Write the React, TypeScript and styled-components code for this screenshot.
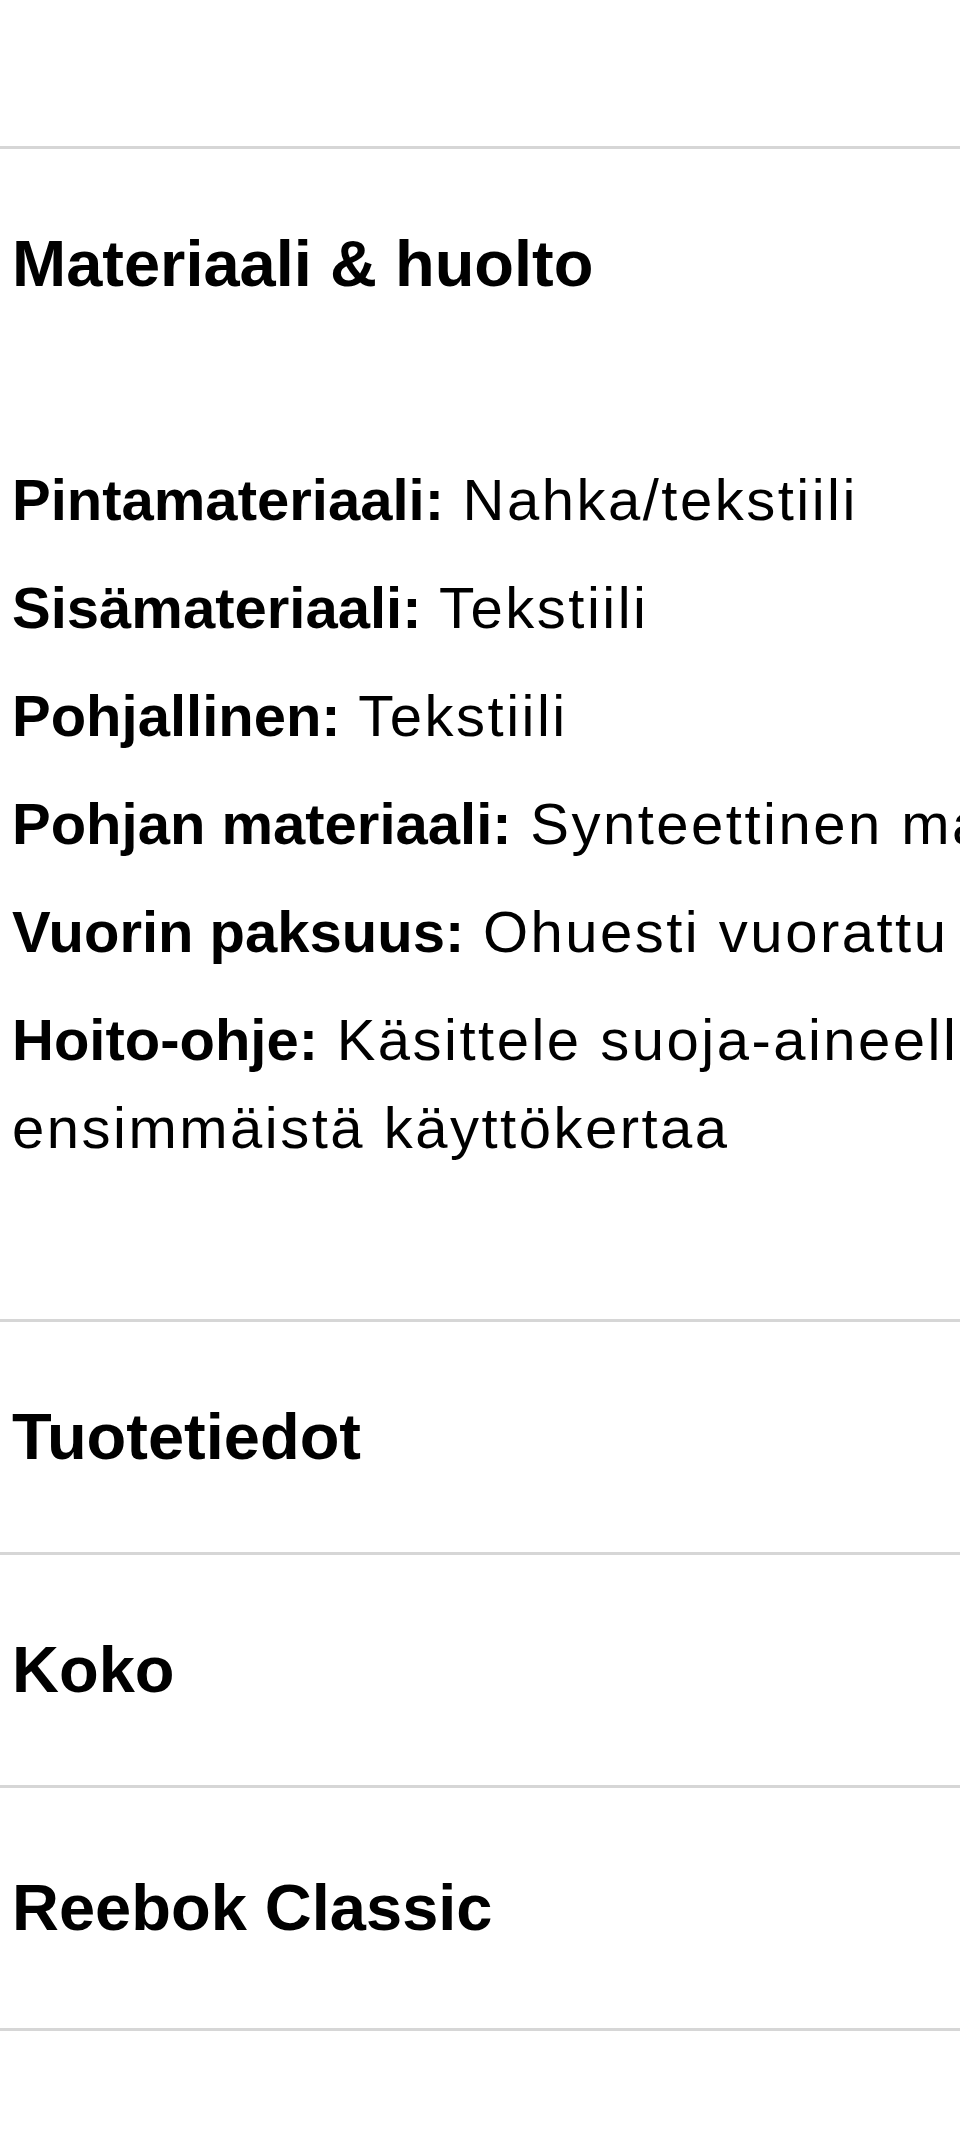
import React from "react";
import styled, { createGlobalStyle } from "styled-components";

const GlobalStyle = createGlobalStyle`
  html, body {
    margin: 0;
    padding: 0;
    background: #ffffff;
    overflow-x: hidden;
  }
  body {
    font-family: "Liberation Sans", Arial, Helvetica, sans-serif;
    color: #000000;
  }
`;

const Page = styled.main`
  width: 1300px;
  padding-top: 146px;
  padding-bottom: 102px;
`;

const AccordionList = styled.div`
  display: flex;
  flex-direction: column;
  border-bottom: 3px solid #d6d6d6;
`;

const Section = styled.section`
  border-top: 3px solid #d6d6d6;
`;

const Header = styled.div<{ $height: number }>`
  display: flex;
  align-items: center;
  justify-content: space-between;
  height: ${(p) => p.$height}px;
  padding: 0 12px;
  box-sizing: border-box;
`;

const Title = styled.h2`
  margin: 0;
  font-size: 65px;
  font-weight: 700;
  line-height: 78px;
  letter-spacing: 0;
`;

const Content = styled.div`
  padding: 77px 12px 127px;
`;

const Spec = styled.p`
  margin: 0 0 20px;
  font-size: 58px;
  line-height: 88px;
  font-weight: 400;
  letter-spacing: 2.5px;
`;

const Label = styled.strong`
  font-weight: 700;
  letter-spacing: 0;
`;

const specs: [string, string][] = [
  ["Pintamateriaali:", "Nahka/tekstiili"],
  ["Sisämateriaali:", "Tekstiili"],
  ["Pohjallinen:", "Tekstiili"],
  ["Pohjan materiaali:", "Synteettinen materiaali"],
  ["Vuorin paksuus:", "Ohuesti vuorattu"],
  ["Hoito-ohje:", "Käsittele suoja-aineella ennen ensimmäistä käyttökertaa"],
];

export default function App() {
  return (
    <>
      <GlobalStyle />
      <Page>
        <AccordionList>
          <Section>
            <Header $height={230}>
              <Title>Materiaali &amp; huolto</Title>
            </Header>
            <Content>
              {specs.map(([label, value]) => (
                <Spec key={label}>
                  <Label>{label}</Label> {value}
                </Spec>
              ))}
            </Content>
          </Section>
          <Section>
            <Header $height={230}>
              <Title>Tuotetiedot</Title>
            </Header>
          </Section>
          <Section>
            <Header $height={230}>
              <Title>Koko</Title>
            </Header>
          </Section>
          <Section>
            <Header $height={240}>
              <Title>Reebok Classic</Title>
            </Header>
          </Section>
        </AccordionList>
      </Page>
    </>
  );
}
